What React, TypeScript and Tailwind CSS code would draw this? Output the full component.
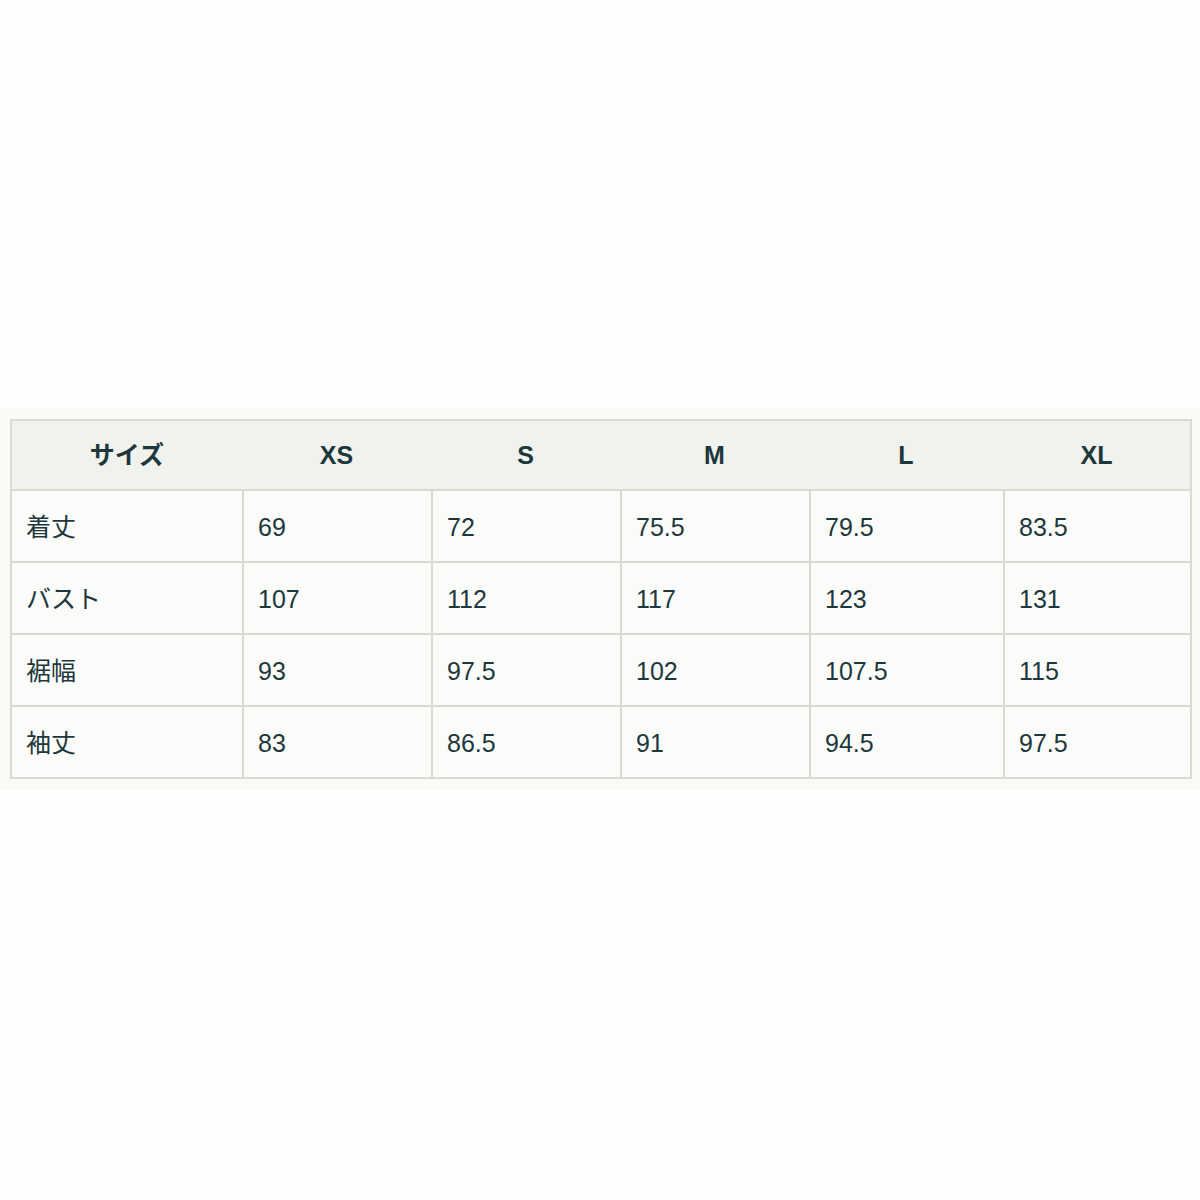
const headers = ["サイズ", "XS", "S", "M", "L", "XL"];

const rows = [
  ["着丈", "69", "72", "75.5", "79.5", "83.5"],
  ["バスト", "107", "112", "117", "123", "131"],
  ["裾幅", "93", "97.5", "102", "107.5", "115"],
  ["袖丈", "83", "86.5", "91", "94.5", "97.5"],
];

const cols = "grid grid-cols-[230px_189px_189px_189px_194px_1fr]";

export default function App() {
  return (
    <div
      className="min-h-screen bg-[#fefefe] pt-[408px] text-[#1d383c]"
      style={{ fontFamily: '"Liberation Sans", Arial, "Noto Sans CJK JP", sans-serif' }}
    >
      <div className="bg-[#fafaf6] pb-[11px] pl-[10px] pr-[8px] pt-[11px]">
        <div className="border-2 border-[#dbdad0]">
          <div className={`${cols} h-[70px] border-b-2 border-[#dbdad0] bg-[#f1f1ed]`}>
            {headers.map((h) => (
              <div key={h} className="flex items-center justify-center pt-[2px] text-[25px] font-bold">
                {h}
              </div>
            ))}
          </div>
          {rows.map((row, i) => (
            <div
              key={row[0]}
              className={`${cols} bg-[#fbfbf9] ${
                i < rows.length - 1 ? "h-[72px] border-b-2 border-[#dbdad0]" : "h-[70px]"
              }`}
            >
              {row.map((cell, j) => (
                <div
                  key={j}
                  className={`flex items-center pl-[14px] pt-[3px] text-[25px] ${
                    j > 0 ? "border-l-2 border-[#dbdad0]" : ""
                  }`}
                >
                  {cell}
                </div>
              ))}
            </div>
          ))}
        </div>
      </div>
    </div>
  );
}
